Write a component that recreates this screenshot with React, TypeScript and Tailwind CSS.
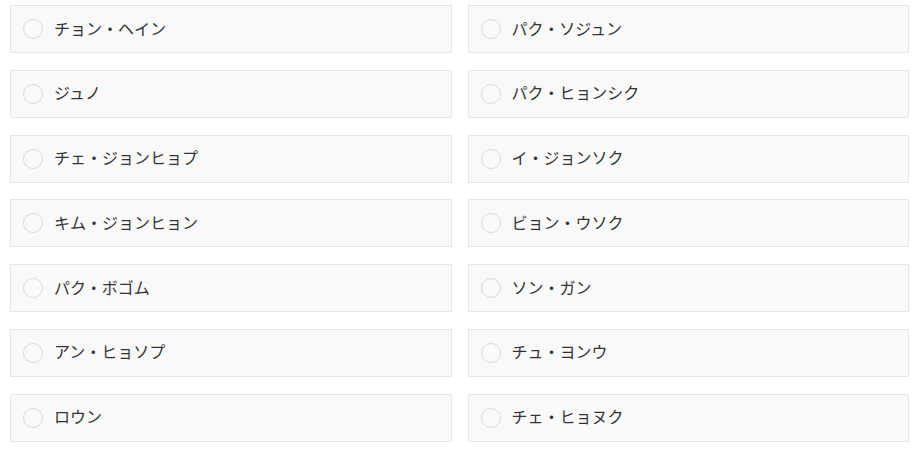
const names: string[] = [
  "チョン・ヘイン",
  "パク・ソジュン",
  "ジュノ",
  "パク・ヒョンシク",
  "チェ・ジョンヒョプ",
  "イ・ジョンソク",
  "キム・ジョンヒョン",
  "ビョン・ウソク",
  "パク・ボゴム",
  "ソン・ガン",
  "アン・ヒョソプ",
  "チュ・ヨンウ",
  "ロウン",
  "チェ・ヒョヌク",
];

function Choice({ label }: { label: string }) {
  return (
    <label className="flex h-[48px] items-center border border-[#e6e6e6] bg-[#f9f9f9] pl-[12px] cursor-pointer">
      <span className="h-[20px] w-[20px] shrink-0 rounded-full border border-[#d9d9d9] bg-[#fafafa]" />
      <span className="mb-[3px] ml-[11px] text-[16px] leading-none text-[#333333]">{label}</span>
    </label>
  );
}

export default function App() {
  return (
    <div
      className="min-h-screen bg-white pl-[10px] pr-[12px] pt-[5px]"
      style={{ fontFamily: '"Noto Sans CJK JP", "Noto Sans", sans-serif' }}
    >
      <div className="grid grid-cols-2 gap-x-[16px] gap-y-[16.8px]">
        {names.map((n) => (
          <Choice key={n} label={n} />
        ))}
      </div>
    </div>
  );
}
